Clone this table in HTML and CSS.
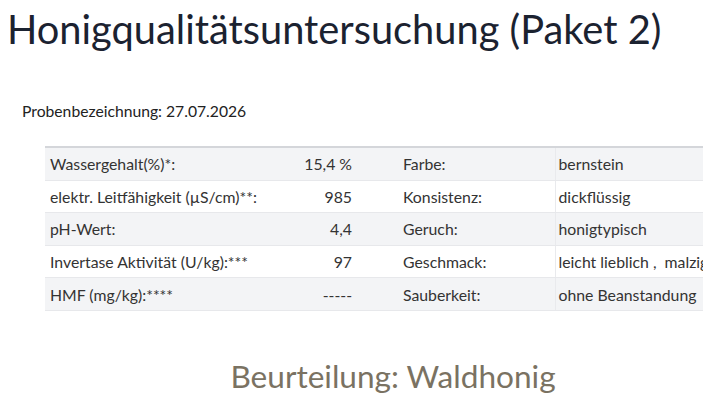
FILE: index.html
```html
<!DOCTYPE html>
<html lang="de">
<head>
<meta charset="utf-8">
<link rel="stylesheet" href="styles.css">
</head>
<body>
<h1 class="title">Honigqualitätsuntersuchung (Paket 2)</h1>
<p class="sample">Probenbezeichnung: 27.07.2026</p>
<table class="results">
  <colgroup>
    <col class="c1"><col class="c2"><col class="c3"><col class="c4">
  </colgroup>
  <tbody>
    <tr><td>Wassergehalt(%)*:</td><td class="num">15,4 %</td><td class="lab">Farbe:</td><td class="val">bernstein</td></tr>
    <tr><td>elektr. Leitfähigkeit (µS/cm)**:</td><td class="num">985</td><td class="lab">Konsistenz:</td><td class="val">dickflüssig</td></tr>
    <tr><td>pH-Wert:</td><td class="num">4,4</td><td class="lab">Geruch:</td><td class="val">honigtypisch</td></tr>
    <tr><td>Invertase Aktivität (U/kg):***</td><td class="num">97</td><td class="lab">Geschmack:</td><td class="val">leicht lieblich ,&nbsp; malzig</td></tr>
    <tr><td>HMF (mg/kg):****</td><td class="num">-----</td><td class="lab">Sauberkeit:</td><td class="val">ohne Beanstandung</td></tr>
  </tbody>
</table>
<p class="verdict">Beurteilung: Waldhonig</p>
</body>
</html>
```
FILE: styles.css
```css
html, body {
  margin: 0;
  padding: 0;
  overflow: hidden;
  background: #fff;
}
body {
  font-family: Lato, "Noto Sans", sans-serif;
  color: #333;
  width: 703px;
}
.title {
  margin: 0;
  padding: 6px 0 0 7px;
  font-size: 39.8px;
  font-weight: 400;
  line-height: 46px;
  color: #1b2230;
  white-space: nowrap;
}
.sample {
  margin: 49px 0 0 22px;
  font-size: 15.7px;
  line-height: 20px;
  color: #222;
}
.results {
  margin: 25px 0 0 45px;
  border-collapse: collapse;
  border-top: 2px solid #d4d6da;
  width: 720px;
  table-layout: fixed;
  font-size: 15.8px;
  color: #333;
}
.c1 { width: 220px; }
.c2 { width: 92px; }
.c3 { width: 198px; }
.c4 { width: 210px; }
.results td {
  height: 31.6px;
  padding: 0 5px;
  border-bottom: 1px solid #e7e8eb;
  white-space: nowrap;
  overflow: hidden;
  vertical-align: middle;
}
.results tr:nth-child(odd) td {
  background: #f3f4f6;
}
.results td.num {
  text-align: right;
}
.results td.lab {
  padding-left: 46px;
}
.results td.val {
  padding-left: 3px;
  border-left: 1px solid #e9eaed;
}
.verdict {
  margin: 46px 0 0 0;
  padding-left: 83px;
  text-align: center;
  font-size: 31.6px;
  line-height: 38px;
  color: #7a7262;
}
```
